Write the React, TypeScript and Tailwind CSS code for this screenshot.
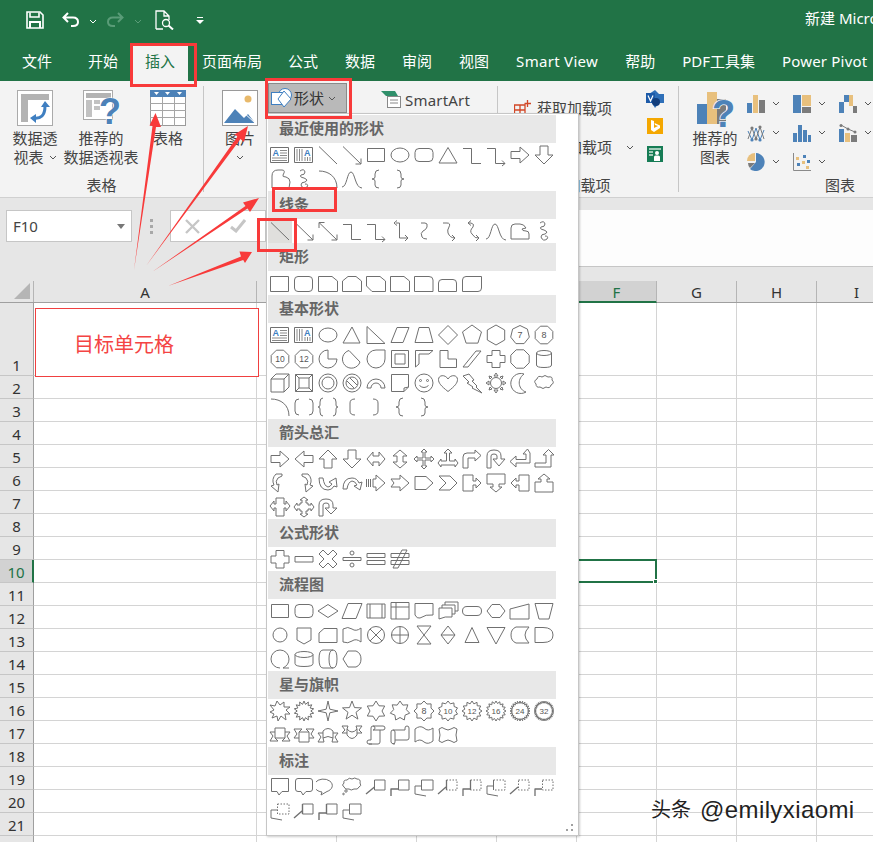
import React from "react";

type Shape = string | React.ReactNode;

function poly(n: number, r: number, rot = -90, ry = r): string {
  let d = "";
  for (let i = 0; i < n; i++) {
    const a = ((rot + (360 * i) / n) * Math.PI) / 180;
    d += (i ? "L" : "M") + (12 + r * Math.cos(a)).toFixed(1) + " " + (12 + ry * Math.sin(a)).toFixed(1);
  }
  return d + "Z";
}
function star(n: number, R: number, r: number): string {
  let d = "";
  for (let i = 0; i < n * 2; i++) {
    const a = ((-90 + (180 * i) / n) * Math.PI) / 180;
    const q = i % 2 ? r : R;
    d += (i ? "L" : "M") + (12 + q * Math.cos(a)).toFixed(1) + " " + (12 + q * Math.sin(a)).toFixed(1);
  }
  return d + "Z";
}
const Num = ({ t, size = 8 }: { t: string; size?: number }) => (
  <text x="12" y="15" textAnchor="middle" fontSize={size} fill="#555" stroke="none" fontFamily="Liberation Sans, sans-serif">
    {t}
  </text>
);
const badge = (d: string, t: string, size = 8) => (
  <>
    <path d={d} />
    <Num t={t} size={size} />
  </>
);
const txtBox = (
  <>
    <rect x="2.5" y="4.5" width="18" height="15" />
    <text x="4.5" y="12.5" fontSize="9" fontWeight="700" fill="#3f7fc1" stroke="none" fontFamily="Liberation Sans, sans-serif">A</text>
    <path d="M12 7.5H19M12 10H19M12 12.5H19M4 15H19M4 17.5H19" stroke="#8a8a8a" />
  </>
);
const vtxtBox = (
  <>
    <rect x="2.5" y="4.5" width="18" height="15" />
    <path d="M5 6V18M7.5 6V18M10 6V18M13 14V18M15.5 14V18M18 14V18" stroke="#8a8a8a" />
    <text x="12" y="12.5" fontSize="9" fontWeight="700" fill="#3f7fc1" stroke="none" fontFamily="Liberation Sans, sans-serif">A</text>
  </>
);
const LINE = "M3 3.5L21 21";
const ARROW = "M3 3.5L21 21M21 21H15.5M21 21V15.5";
const ELBOW = "M3 5.5H11.5V20.5H21";
const ELBOWA = "M3 5.5H11.5V20.5H21M21 20.5L18 17.5M21 20.5L18 23";
const FREE = "M4 21V9Q4 3 10 3H14Q18 3 15 8Q14 10 18 10Q22 11 22 15L21 21";
const SCRIB = "M8 4Q12 1 13 5Q13 8 9 8Q7 10 12 11Q17 13 13 15Q9 15 9 18Q11 23 15 20Q17 17 13 17";
const ARC = "M3 4C13 4 21 10 21 21";
const CURVE = "M2 20C7 20 7 5 11 5C15 5 15 21 22 21";
const BL = "M15 3Q11 3 11 7V10Q11 12 8 12Q11 12 11 14V18Q11 21 15 21";
const BR = "M9 3Q13 3 13 7V10Q13 12 16 12Q13 12 13 14V18Q13 21 9 21";
const TRI = "M12 4.5L21 20H3Z";
const RARR = "M3 8.5H12V4L21 12L12 20V15.5H3Z";
const DARR = "M8 3H16V12H21L12 21L3 12H8Z";
const RECT = "M3.5 5.5H20.5V18.5H3.5Z";
const RR = "M7 5.5H17Q21 5.5 21 9.5V14.5Q21 18.5 17 18.5H7Q3 18.5 3 14.5V9.5Q3 5.5 7 5.5Z";

const sections: { title: string; shapes: Shape[] }[] = [
  {
    title: "最近使用的形状",
    shapes: [
      txtBox, vtxtBox, LINE, ARROW, RECT, <ellipse cx="12" cy="12" rx="9" ry="7" />, RR, TRI, ELBOW, ELBOWA, RARR, DARR,
      FREE, SCRIB, ARC, CURVE, BL, BR,
    ],
  },
  {
    title: "线条",
    shapes: [
      LINE, ARROW, "M3 3.5L21 21M21 21H15.5M21 21V15.5M3 3.5H8.5M3 3.5V9", ELBOW, ELBOWA,
      "M8 4H11.5V19H20M20 19L17 16M20 19L17 22M6 4L9 1.5M6 4L9 6.5",
      "M9 4H13Q16 4 15 8Q14 11 11 12Q8 14 10 18Q11 20 15 20",
      "M7 4H11Q15 4 13 8Q11 11 12 14Q14 19 19 19M19 19L16 16M19 19L16 22",
      "M8 4H11Q15 5 13 8Q9 12 12 15Q15 20 19 19M19 19L16 16M19 19L16 22M8 4L11 1.5M8 4L11 6.5",
      CURVE, "M3 20V9Q3 5 7 5H12Q16 5 18 9L14 10Q14 12 18 12Q21 12 21 15V20Z", SCRIB,
    ],
  },
  {
    title: "矩形",
    shapes: [
      "M2.5 5.5H20.5V20.5H2.5Z",
      "M6 5.5H17Q20.5 5.5 20.5 9V17Q20.5 20.5 17 20.5H6Q2.5 20.5 2.5 17V9Q2.5 5.5 6 5.5Z",
      "M2.5 5.5H16L21.5 10V20.5H2.5Z",
      "M8 5.5H16L21.5 10V20.5H2.5V10Z",
      "M2.5 5.5H16L21.5 10V20.5H8L2.5 15Z",
      "M2.5 5.5H16L21.5 10V20.5H2.5Z",
      "M2.5 5.5H17Q21 5.5 21 9V20.5H2.5Z",
      "M6 8.5H17Q20.5 8.5 20.5 12V20.5H2.5V12Q2.5 8.5 6 8.5Z",
      "M6 5.5H21.5V17Q21.5 20.5 18 20.5H2.5V9Q2.5 5.5 6 5.5Z",
    ],
  },
  {
    title: "基本形状",
    shapes: [
      txtBox, vtxtBox, <ellipse cx="12" cy="12" rx="9" ry="7" />, "M12 4L20 20H3Z", "M3 3.5L21 20.5H3Z", "M9 4.5H21L15 19.5H3Z", "M7 4.5H17L21 19.5H3Z",
      poly(4, 9.5), poly(5, 10), poly(6, 10), badge(poly(7, 9.5), "7", 9), badge(poly(8, 9.5, -67.5), "8", 9),
      badge(poly(8, 9.5, -67.5), "10", 8.5), badge(poly(8, 9.5, -67.5), "12", 8.5),
      "M12 3A9 9 0 1 0 21 12H12Z", "M9 3.5L20 15A9 9 0 1 1 9 3.5Z",
      "M12 3H21V12A9 9 0 1 1 12 3Z",
      <><path d="M3.5 3.5H20.5V20.5H3.5Z" /><path d="M7 7H17V17H7Z" /></>,
      "M3.5 20V3.5H21L17 7H7V17Z", "M4 3.5H12V12H20.5V20.5H4Z", "M3 20L16 4H21L8 20Z",
      "M8 3.5H16V8.5H21V15.5H16V20.5H8V15.5H3V8.5H8Z", poly(8, 10, -67.5), <><ellipse cx="12" cy="6" rx="7.5" ry="2.5" /><path d="M4.5 6V18Q4.5 20.5 12 20.5Q19.5 20.5 19.5 18V6" /></>,
      "M3 8H16V21H3ZM3 8L8 3H21V16L16 21M16 8L21 3",
      <><path d="M3.5 3.5H20.5V20.5H3.5Z" /><path d="M7 7H17V17H7ZM3.5 3.5L7 7M20.5 3.5L17 7M3.5 20.5L7 17M20.5 20.5L17 17" /></>,
      <><circle cx="12" cy="12" r="9" /><circle cx="12" cy="12" r="6" /></>,
      <><circle cx="12" cy="12" r="9" /><circle cx="12" cy="12" r="6" /><path d="M7 10L14 17M10 7L17 14" /></>,
      "M3 17A9 9 0 0 1 21 17H17A5 5 0 0 0 7 17Z",
      "M3.5 3.5H20.5V16L16 20.5H3.5ZM20.5 16L16 17V20.5",
      <><circle cx="12" cy="12" r="9" /><circle cx="8.5" cy="9.5" r="1" /><circle cx="15.5" cy="9.5" r="1" /><path d="M7.5 14.5Q12 18.5 16.5 14.5" /></>,
      "M12 20.5C5 15 2.5 12 2.5 8.5C2.5 4 9 3 12 8C15 3 21.5 4 21.5 8.5C21.5 12 19 15 12 20.5Z",
      "M3 5L9 3L14 9L12 10L17 15L16 16L22 22L12 17L13 16L7 12L9 11Z",
      <><circle cx="12" cy="12" r="5.5" /><path d="M12 2L14 5H10ZM12 22L14 19H10ZM2 12L5 14V10ZM22 12L19 14V10ZM5 5L8 6L6 8ZM19 5L16 6L18 8ZM5 19L8 18L6 16ZM19 19L16 18L18 16Z" /></>,
      "M16 3A10 10 0 1 0 18 21C11 19 8 9 16 3Z",
      "M5 8Q6 4 10 6Q13 3 16 6Q21 5 20 9Q23 12 19 14Q18 18 14 16Q11 19 8 16Q4 17 4 13Q1 10 5 8Z",
      ARC, "M7 4Q3 4 3 8V16Q3 20 7 20M17 4Q21 4 21 8V16Q21 20 17 20",
      "M7 3Q4 3 4 7V10Q4 12 2 12Q4 12 4 14V17Q4 21 7 21M17 3Q20 3 20 7V10Q20 12 22 12Q20 12 20 14V17Q20 21 17 21",
      "M15 4Q10 4 10 8V16Q10 20 15 20", "M9 4Q14 4 14 8V16Q14 20 9 20", BL, BR,
    ],
  },
  {
    title: "箭头总汇",
    shapes: [
      RARR, "M21 8.5H12V4L3 12L12 20V15.5H21Z", "M8 21V12H3L12 3L21 12H16V21Z", DARR,
      "M3 12L9 5V9H15V5L21 12L15 19V15H9V19Z", "M12 3L19 9H15V15H19L12 21L5 15H9V9H5Z",
      "M12 2L15 5H13V11H19V9L22 12L19 15V13H13V19H15L12 22L9 19H11V13H5V15L2 12L5 9V11H11V5H9Z",
      "M12 2L16 6H13.5V14H19V12L22 16L19 20V18H5V20L2 16L5 12V14H10.5V6H8Z",
      "M3 21V10Q3 6 7 6H15V3L21 8.5L15 14V11H8V21Z",
      "M3 21V9Q3 3 10 3Q17 3 17 9V12H21L15 19L9 12H13V9Q13 7 10 7Q7 7 7 9V21Z",
      "M22 6V16H8V20L2 14.5L8 9V12.5H18V7H15L19.5 2Z",
      "M3 16H14V8H11L16.5 2.5L22 8H19V20H3Z",
      "M8 3Q3 8 6 14L3 15L10 21L11 13L9 14Q7 10 10 7L14 5V3Z",
      "M16 3Q21 8 18 14L21 15L14 21L13 13L15 14Q17 10 14 7L10 5V3Z",
      "M3 7Q3 19 12 19Q16 19 18 15L21 16L20 7L13 11L16 13Q14 16 12 16Q8 15 7 7Z",
      "M3 18Q3 7 12 7Q17 7 19 12L22 11L20 19L14 15L17 14Q15 10 12 10Q8 11 7 18Z",
      "M2.5 8V16M4.5 8V16M6.5 8V16M9 8H12V4L21 12L12 20V16H9Z", "M3 8H12V4L21 12L12 20V16H3L6 12Z",
      "M3 5.5H14L21 12L14 18.5H3Z", "M3 5L14 5L21 12L14 19H3L10 12Z",
      "M3 4H13V10H16V7L21 12L16 17V14H13V20H3Z", "M3 3H21V13H15V16H18L12 21L6 16H9V13H3Z",
      "M21 4H11V10H8V7L3 12L8 17V14H11V20H21Z", "M3 21V11H9V8H6L12 3L18 8H15V11H21V21Z",
      "M8 3H16V9H18V6L22 11L18 16V13H16V21H8V13H6V16L2 11L6 6V9H8Z",
      "M8 8H10V5H8L12 2L16 5H14V8H16V10H19V8L22 12L19 16V14H16V16H14V19H16L12 22L8 19H10V16H8V14H5V16L2 12L5 8V10H8Z",
      "M3 21V10Q3 4 10 4Q17 4 17 10V13H21L15 19L9 13H13V10Q13 8 10 8Q7 8 7 10V21Z",
    ],
  },
  {
    title: "公式形状",
    shapes: [
      "M8 3.5H16V9H21V16H16V21H8V16H3V9H8Z", "M3 9.5H21V15H3Z", "M7 3L12 8L17 3L21 7L16 12L21 17L17 21L12 16L7 21L3 17L8 12L3 7Z",
      <><path d="M3 10.5H21V13.5H3Z" /><circle cx="12" cy="6" r="2" /><circle cx="12" cy="18" r="2" /></>,
      "M3 6.5H21V10.5H3ZM3 13.5H21V17.5H3Z", "M3 6.5H21V10.5H3ZM3 13.5H21V17.5H3ZM14 3H19L10 21H5Z",
    ],
  },
  {
    title: "流程图",
    shapes: [
      RECT, RR, "M12 5.5L22 12L12 18.5L2 12Z", "M8 4.5H22L16 19.5H2Z",
      <><path d="M3 5H21V19H3Z" /><path d="M6 5V19M18 5V19" /></>, <><path d="M3 3.5H21V20H3Z" /><path d="M3 8H21M8 3.5V20" /></>,
      "M3 4.5H21V16Q14 15 8 19Q5 20 3 16Z",
      "M3 9H16V18Q9 17 3 20ZM6 9V6H19V15H16M9 6V3H22V12H19",
      "M7 7.5H17Q21.5 7.5 21.5 12Q21.5 16.5 17 16.5H7Q2.5 16.5 2.5 12Q2.5 7.5 7 7.5Z", "M8 5.5H16L21 12L16 18.5H8L3 12Z", "M2 10L21 5V20H2Z", "M3 4.5H21L17 20H7Z",
      <circle cx="12" cy="12" r="7" />, "M5 5H19V17L12 21L5 17Z", "M8 5.5H21V19.5H3V10Z", "M3 6Q8 3 12 6Q16 9 21 5V19Q16 15 12 18Q8 21 3 19Z",
      <><circle cx="12" cy="12" r="8.5" /><path d="M6 6L18 18M18 6L6 18" /></>, <><circle cx="12" cy="12" r="8.5" /><path d="M3.5 12H20.5M12 3.5V20.5" /></>,
      "M5 3H19L5 21H19Z", "M12 3L19 12L12 21L5 12ZM5 12H19", "M12 4.5L19 19.5H5Z", "M3 4.5H21L12 21Z",
      "M8 4H21Q17 8 17 12Q17 16 21 20H8Q3 18 3 12Q3 6 8 4Z", "M3 4.5H11Q21 4.5 21 12Q21 19.5 11 19.5H3Z",
      "M12 21A9 9 0 1 1 21 12Q21 18 15 21H21", <><ellipse cx="12" cy="7.5" rx="9" ry="3" /><path d="M3 7.5V16.5Q3 19.5 12 19.5Q21 19.5 21 16.5V7.5" /></>,
      <><path d="M7 3H17Q21 3 21 12Q21 21 17 21H7Q3 21 3 12Q3 3 7 3Z" /><path d="M17 3Q13 3 13 12Q13 21 17 21" /></>,
      "M8 4H16Q21 6 21 12Q21 18 16 20H8L3 12Z",
    ],
  },
  {
    title: "星与旗帜",
    shapes: [
      "M2 6L7 7L9 2L12 6L16 3L16 8L22 8L18 11L22 15L17 15L18 21L13 17L10 22L9 17L4 19L6 15L2 13L6 11Z",
      star(14, 10, 6.8), star(4, 10, 2.5), star(5, 10, 4.2), star(6, 10, 6), star(7, 10, 6.5),
      badge(star(8, 10, 7.6), "8", 9), badge(star(10, 10, 7.6), "10", 8), badge(star(12, 10, 7.4), "12", 8), badge(star(16, 10, 7.6), "16", 8), badge(star(24, 10, 7.6), "24", 8), badge(star(32, 10, 7.8), "32", 8),
      "M7 5H17V15H7ZM7 9H2L5 13L2 18H10L7 15M17 9H22L19 13L22 18H14L17 15",
      "M7 9H17V19H7ZM7 15H2L5 11L2 6H10L7 9M17 15H22L19 11L22 6H14L17 9",
      "M7 8Q12 3 17 8V15Q12 12 7 15ZM7 10H2L5 14L2 19H8L7 15M17 10H22L19 14L22 19H16L17 15",
      "M7 12Q12 19 17 12V6Q12 12 7 6ZM7 10H2L5 7L2 3H8L7 6M17 10H22L19 7L22 3H16L17 6",
      "M8 21H5Q3 21 3 19Q3 17 5 17H7V5Q7 3 9 3H19Q21 3 21 5Q21 7 19 7H16V19Q16 21 14 21H5M9 3Q11 3 11 5Q11 7 9 7H16",
      "M7 21Q3 21 3 19V9Q3 7 5 7H17V5Q17 3 19 3Q21 3 21 5V15Q21 17 19 17H7V19Q7 21 5 21M5 7Q7 7 7 9V17",
      "M3 6Q8 2 12 5Q16 9 21 5V18Q16 22 12 19Q8 15 3 19Z",
      "M3 6Q6 3 9 6Q12 8 15 6Q18 3 21 6L20 12L21 18Q18 21 15 18Q12 16 9 18Q6 21 3 18L4 12Z",
    ],
  },
  {
    title: "标注",
    shapes: [
      "M3.5 3.5H20.5V16.5H14L11 20L9 16.5H3.5Z",
      "M6 3.5H18Q20.5 3.5 20.5 6V14Q20.5 16.5 18 16.5H14L11 20L9 16.5H6Q3.5 16.5 3.5 14V6Q3.5 3.5 6 3.5Z",
      "M6 17A9 6.5 0 1 1 11 16.5L5 20Z",
      <><path d="M7 5Q9 2 12 4Q15 2 17 4Q21 4 20 8Q22 11 19 12Q18 15 14 14Q11 16 9 14Q5 15 4 12Q1 10 4 8Q3 5 7 5Z" /><circle cx="6" cy="16" r="1.2" /><circle cx="3.5" cy="19" r="0.8" /></>,
      <><path d="M10.5 5H21V15H10.5Z" /><path d="M2 19L10.5 12" strokeWidth="1.4" /></>,
      <><path d="M10.5 5H21V15H10.5Z" /><path d="M3 21V14H10.5" strokeWidth="1.4" /></>,
      <><path d="M9.5 5H21V15H9.5Z" /><path d="M3 11H9.5M3 11V19L14 21" /></>,
      <><path d="M10.5 5H21V15H10.5Z" strokeDasharray="1.5 1.5" /><path d="M10.5 5V15M2 19L10 12" strokeWidth="1.3" /></>,
      <><path d="M10.5 5H21V15H10.5Z" strokeDasharray="1.5 1.5" /><path d="M10.5 5V15M3 21V14H10" strokeWidth="1.3" /></>,
      <><path d="M9.5 5H21V15H9.5Z" strokeDasharray="1.5 1.5" /><path d="M9.5 5V15M3 11H9.5M3 11V19L14 21" /></>,
      <><path d="M10.5 5H21V15H10.5Z" strokeDasharray="1.5 1.5" /><path d="M2 19L10 12" strokeWidth="1.3" /></>,
      <><path d="M10.5 5H21V15H10.5Z" strokeDasharray="1.5 1.5" /><path d="M3 21V14H10" strokeWidth="1.3" /></>,
      <><path d="M9.5 5H21V15H9.5Z" strokeDasharray="1.5 1.5" /><path d="M3 11H9.5M3 11V19L14 21" /></>,
      <><path d="M10.5 5H21V15H10.5Z" /><path d="M10.5 5V15M2 19L10 12" strokeWidth="1.4" /></>,
      <><path d="M10.5 5H21V15H10.5Z" /><path d="M10.5 5V15M3 21V14H10" strokeWidth="1.4" /></>,
      <><path d="M9.5 5H21V15H9.5Z" /><path d="M9.5 5V15M3 11H9.5M3 11V19L14 21" /></>,
    ],
  },
];

function Gl({ shape }: { shape: Shape }) {
  return (
    <svg width="24" height="24" viewBox="0 0 24 24" fill="none" stroke="#707070" strokeWidth="1" strokeLinejoin="round">
      {typeof shape === "string" ? <path d={shape} /> : shape}
    </svg>
  );
}

function Chev({ className = "" }: { className?: string }) {
  return (
    <svg width="8" height="5" viewBox="0 0 8 5" fill="none" stroke="#555" strokeWidth="1" className={`shrink-0 ${className}`}>
      <path d="M1 1L4 4L7 1" />
    </svg>
  );
}

const BLUE = "#4d82b8";
const YEL = "#e8c07d";
const GRY = "#7b7b7b";

const small: React.ReactNode[] = [
  <><rect x="0" y="8" width="5" height="10" fill={BLUE} /><rect x="6" y="0" width="5" height="18" fill={YEL} /><rect x="12" y="5" width="6" height="13" fill={GRY} /></>,
  <><rect x="0" y="0" width="8" height="18" fill={BLUE} /><rect x="9" y="0" width="9" height="11" fill={YEL} /><rect x="9" y="12" width="9" height="6" fill={GRY} /></>,
  <><rect x="0" y="7" width="5" height="11" fill={BLUE} /><rect x="5" y="0" width="5" height="7" fill={BLUE} /><rect x="10" y="0" width="4" height="11" fill={YEL} /><rect x="14" y="11" width="4" height="7" fill={GRY} /></>,
  <><path d="M1 7L5 16L9 4L13 16L17 6" fill="none" stroke={BLUE} /><path d="M1 15L5 4L9 15L13 3L17 15" fill="none" stroke={GRY} /><circle cx="5" cy="4" r="1.6" fill={GRY} /><circle cx="13" cy="3" r="1.6" fill={GRY} /><circle cx="5" cy="16" r="1.6" fill={BLUE} /><circle cx="13" cy="16" r="1.6" fill={BLUE} /><circle cx="9" cy="15" r="1.6" fill={GRY} /></>,
  <><rect x="0" y="9" width="4" height="9" fill={BLUE} /><rect x="5" y="1" width="4" height="17" fill={BLUE} /><rect x="10" y="6" width="4" height="12" fill={BLUE} /><rect x="15" y="11" width="3" height="7" fill={BLUE} /></>,
  <><rect x="0" y="5" width="5" height="13" fill={BLUE} /><rect x="6" y="9" width="5" height="9" fill={YEL} /><rect x="12" y="11" width="6" height="7" fill={GRY} /><path d="M2 1L9 5L16 8" stroke={GRY} fill="none" /><circle cx="2" cy="1.5" r="1.5" fill={GRY} /><circle cx="9" cy="5" r="1.5" fill={GRY} /><circle cx="16" cy="8" r="1.5" fill={GRY} /></>,
  <><path d="M9 9V0A9 9 0 1 1 3 16Z" fill={BLUE} /><path d="M8 8H0A8 8 0 0 1 8 0Z" fill={YEL} /><path d="M8 10H1Q1 13 3 15Z" fill={GRY} /></>,
  <><path d="M0.5 0V17.5H18" fill="none" stroke="#8a8a8a" /><rect x="3" y="4" width="3" height="3" fill={YEL} /><rect x="10" y="2" width="3" height="3" fill={BLUE} /><rect x="4" y="10" width="3" height="3" fill={BLUE} /><rect x="9" y="8" width="3" height="3" fill={YEL} /><rect x="14" y="7" width="3" height="3" fill={BLUE} /><rect x="13" y="13" width="3" height="3" fill={YEL} /></>,
];

function Big({ icon, lines, w = "w-[66px]" }: { icon: React.ReactNode; lines: React.ReactNode[]; w?: string }) {
  return (
    <div className={`${w} flex flex-col items-center pt-[9px] shrink-0`}>
      <div className="h-[36px] mb-[3px]">{icon}</div>
      {lines.map((l, i) => (
        <div key={i} className="h-[19px] leading-[19px] whitespace-nowrap flex items-center">
          {l}
        </div>
      ))}
    </div>
  );
}

const PivotIcon = (
  <svg width="36" height="36" viewBox="0 0 36 36">
    <rect x="0.5" y="0.5" width="35" height="35" fill="#fff" stroke="#aaa" />
    <rect x="4" y="4" width="28" height="6" fill="#b3b3b3" />
    <rect x="4" y="4" width="7" height="28" fill="#b3b3b3" />
    <path d="M16 28Q28 30 28 16" fill="none" stroke="#3f7fc1" strokeWidth="3" />
    <path d="M24 17L28 11L33 17ZM19 24L13 28L19 33Z" fill="#3f7fc1" />
  </svg>
);
const RecPivotIcon = (
  <svg width="36" height="36" viewBox="0 0 36 36" className="overflow-visible">
    <rect x="0.5" y="0.5" width="29" height="29" fill="#fff" stroke="#aaa" />
    <rect x="3" y="3" width="25" height="5" fill="#b3b3b3" />
    <path d="M3 10H9V27H3ZM11 10H17V14H11ZM11 16H17V20H11Z" fill="#c2c2c2" />
    <text x="16" y="34" fontSize="36" fontWeight="700" fill="#4d82b8" stroke="#fff" strokeWidth="1.2" paintOrder="stroke" fontFamily="Liberation Sans, sans-serif">?</text>
  </svg>
);
const TableIcon = (
  <svg width="36" height="36" viewBox="0 0 36 36">
    <rect x="0.5" y="0.5" width="35" height="35" fill="#fff" stroke="#9a9a9a" />
    <rect x="0" y="0" width="36" height="7" fill="#4d82b8" />
    <path d="M4 2H9L6.5 5ZM15 2H20L17.5 5ZM27 2H32L29.5 5Z" fill="#fff" />
    <path d="M12.5 7V36M24.5 7V36M0 13.5H36M0 20.5H36M0 27.5H36" stroke="#a6a6a6" />
  </svg>
);
const PicIcon = (
  <svg width="36" height="36" viewBox="0 0 36 36">
    <rect x="0.5" y="0.5" width="35" height="35" fill="#fff" stroke="#9a9a9a" />
    <circle cx="26" cy="9" r="3.5" fill="#e8b96b" />
    <path d="M2 33L13 19L22 28L26 24L33 33Z" fill="#4d82b8" />
    <path d="M20 21L33 33" stroke="#fff" strokeWidth="1" />
  </svg>
);
const ShapeIcon = (
  <svg width="22" height="22" viewBox="0 0 22 22" className="shrink-0">
    <circle cx="14" cy="8" r="6.5" fill="#fff" stroke="#3f7fc1" />
    <rect x="0.5" y="5.5" width="12" height="12" fill="#fff" stroke="#3f7fc1" />
    <path d="M13 4L20 12L13 20L7 12Z" fill="#fff" stroke="#3f7fc1" />
  </svg>
);
const RecChartIcon = (
  <svg width="36" height="36" viewBox="0 0 36 36" className="overflow-visible">
    <rect x="0" y="14" width="11" height="20" fill={BLUE} />
    <rect x="10" y="2" width="10" height="32" fill={YEL} />
    <rect x="20" y="9" width="9" height="25" fill={GRY} />
    <text x="15" y="37" fontSize="38" fontWeight="700" fill="#4d82b8" stroke="#f3f3f3" strokeWidth="1.5" paintOrder="stroke" fontFamily="Liberation Sans, sans-serif">?</text>
  </svg>
);

const gridLine = "border-r border-b border-[#d4d4d4]";
const colWidths = ["w-[223px]", "w-[80px]", "w-[80px]", "w-[80px]", "w-[80px]", "w-[80px]", "w-[80px]", "w-[80px]", "w-[80px]"];
const colNames = ["A", "B", "C", "D", "E", "F", "G", "H", "I"];
const hiddenCols = ["B", "C", "D", "E"];
const rows = Array.from({ length: 22 }, (_, i) => i + 1);

export default function App() {
  return (
    <div className="relative w-[873px] h-[842px] overflow-hidden bg-white text-[#444] text-[15px] font-['Noto_Sans','Noto_Sans_CJK_SC',sans-serif]">
      {/* title bar */}
      <div className="h-[46px] bg-[#217346] flex items-center text-white">
        <svg width="18" height="18" viewBox="0 0 18 18" className="shrink-0 ml-[26px] -mt-[6px]" fill="none" stroke="#fff" strokeWidth="1.6">
          <path d="M1 1H14L17 4V17H1Z" />
          <path d="M4 1.5V6H13V1.5" />
          <path d="M4 17V11H14V17" strokeWidth="2" />
        </svg>
        <svg width="18" height="16" viewBox="0 0 18 16" className="shrink-0 ml-[18px] -mt-[6px]" fill="none" stroke="#fff" strokeWidth="2">
          <path d="M6 1L1.5 5.5L6 10M2 5.5H11Q16 5.5 16 10Q16 14 11 14H9" />
        </svg>
        <Chev className="ml-[9px] -mt-[4px] [&>path]:stroke-white" />
        <svg width="18" height="16" viewBox="0 0 18 16" className="shrink-0 ml-[9px] -mt-[6px]" fill="none" stroke="#5a9c78" strokeWidth="2">
          <path d="M12 1L16.5 5.5L12 10M16 5.5H7Q2 5.5 2 10Q2 14 7 14H9" />
        </svg>
        <Chev className="ml-[10px] -mt-[4px] [&>path]:stroke-[#5a9c78]" />
        <svg width="20" height="20" viewBox="0 0 20 20" className="shrink-0 ml-[13px] -mt-[6px]" fill="none" stroke="#fff" strokeWidth="1.3">
          <path d="M1 19V1H9L14 6V10M9 1V6H14M1 19H8" />
          <circle cx="11" cy="13" r="3.5" />
          <path d="M13.5 15.5L18 19.5" strokeWidth="2" />
        </svg>
        <svg width="8" height="8" viewBox="0 0 8 8" className="shrink-0 ml-[21px] -mt-[4px]" fill="#fff">
          <path d="M1 0H7V1H1ZM0 3H8L4 7Z" />
        </svg>
        <div className="ml-[601px] shrink-0 whitespace-nowrap text-[15px] text-white -mt-[9px]">新建 Microsoft Excel 工作表 - Excel</div>
      </div>
      {/* tabs */}
      <div className="h-[35px] bg-[#217346] flex text-white whitespace-nowrap">
        <div className="ml-[22px] leading-[30px]">文件</div>
        <div className="ml-[36px] leading-[30px]">开始</div>
        <div className="ml-[14px] w-[56px] bg-[#f3f3f3] text-[#217346] text-center leading-[30px]">插入</div>
        <div className="ml-[14px] leading-[30px]">页面布局</div>
        <div className="ml-[26px] leading-[30px]">公式</div>
        <div className="ml-[27px] leading-[30px]">数据</div>
        <div className="ml-[27px] leading-[30px]">审阅</div>
        <div className="ml-[27px] leading-[30px]">视图</div>
        <div className="ml-[27px] leading-[30px] tracking-[0.3px]">Smart View</div>
        <div className="ml-[27px] leading-[30px]">帮助</div>
        <div className="ml-[27px] leading-[30px]">PDF工具集</div>
        <div className="ml-[27px] leading-[30px] tracking-[0.2px]">Power Pivot</div>
      </div>
      {/* ribbon */}
      <div className="h-[117px] bg-[#f3f3f3] border-b border-[#d0d0d0] flex">
        <div className="w-[203px] shrink-0 flex flex-col">
          <div className="h-[92px] flex px-[2px]">
            <Big icon={PivotIcon} lines={["数据透", <>视表<Chev className="ml-[5px]" /></>]} />
            <Big icon={RecPivotIcon} lines={["推荐的", "数据透视表"]} />
            <div className="ml-px">
              <Big icon={TableIcon} lines={["表格"]} />
            </div>
          </div>
          <div className="h-[24px] leading-[24px] text-center">表格</div>
        </div>
        <div className="w-px bg-[#c6c6c6] my-[5px] shrink-0" />
        <div className="w-[293px] shrink-0 flex flex-col">
          <div className="h-[92px] flex items-start">
            <div className="ml-[8px]">
              <Big w="w-[56px]" icon={PicIcon} lines={["图片", <Chev />]} />
            </div>
            <div className="mt-[2px] w-[79px] h-[30px] bg-[#b9b9b9] border border-[#8a8a8a] flex items-center pl-[2px] text-[#333]">
              {ShapeIcon}
              <span className="ml-px">形状</span>
              <Chev className="ml-[4px]" />
            </div>
            <div className="ml-[34px] mt-[8px] flex items-center text-[#444]">
              <svg width="20" height="18" viewBox="0 0 20 18">
                <path d="M0 0H14L17 5H5Z" fill="#2f8f6a" />
                <rect x="6.5" y="5.5" width="13" height="11" fill="#fff" stroke="#888" />
                <path d="M9 9H17M9 12H17" stroke="#888" />
              </svg>
              <span className="ml-[4px] tracking-[0.2px]">SmartArt</span>
            </div>
          </div>
          <div className="h-[24px] leading-[24px] text-center">插图</div>
        </div>
        <div className="w-px bg-[#c6c6c6] my-[5px] shrink-0" />
        <div className="w-[180px] shrink-0 flex flex-col">
          <div className="h-[92px] flex">
            <div className="w-[140px] pl-[16px] pt-[15px] flex flex-col gap-[15px] shrink-0">
              <div className="h-[24px] flex items-center whitespace-nowrap">
                <svg width="17" height="16" viewBox="0 0 17 16" fill="none" stroke="#d24726" strokeWidth="1.3">
                  <path d="M0.5 5H11V15H0.5ZM0.5 10H11M6 5V15M13.5 0V7M10.5 3.5H17" />
                </svg>
                <span className="ml-[6px]">获取加载项</span>
              </div>
              <div className="h-[24px] flex items-center whitespace-nowrap">
                <svg width="17" height="16" viewBox="0 0 17 16" fill="#3f7fc1"><rect width="15" height="14" /></svg>
                <span className="ml-[6px]">我的加载项</span>
                <Chev className="ml-[14px]" />
              </div>
            </div>
            <div className="pt-[9px] flex flex-col gap-[10px] ml-[8px] shrink-0">
              <svg width="18" height="18" viewBox="0 0 18 18">
                <path d="M3 4L9 0L13 4H18V13H13L9 18L6 13H3Z" fill="#2e6fb8" />
                <rect x="0" y="3" width="9" height="10" fill="#1c5aa8" />
                <circle cx="10" cy="12" r="4" fill="#123e7c" />
                <path d="M2 5.5L4.5 11L7 5.5" stroke="#fff" strokeWidth="1.2" fill="none" />
              </svg>
              <svg width="18" height="18" viewBox="0 0 18 18">
                <rect x="1" width="16" height="16" fill="#f4a700" />
                <path d="M5 2L8 3V10L12 8L9 7L8.5 5L14 7.5V10L8 14L5 12Z" fill="#fff" />
              </svg>
              <svg width="18" height="18" viewBox="0 0 18 18">
                <rect x="1" width="16" height="16" fill="#167c55" />
                <path d="M3 3H15M3 6H7M3 9H7" stroke="#cfe6dc" strokeWidth="1.5" />
                <circle cx="11" cy="7" r="2" fill="#fff" />
                <path d="M8 15V11Q8 9.5 9.5 9.5H12.5Q14 9.5 14 11V15Z" fill="#fff" />
              </svg>
            </div>
          </div>
          <div className="h-[24px] leading-[24px] text-center">加载项</div>
        </div>
        <div className="w-px bg-[#c6c6c6] my-[5px] shrink-0" />
        <div className="w-[322px] shrink-0 flex flex-col">
          <div className="h-[92px] flex">
            <div className="ml-[4px]">
              <Big w="w-[64px]" icon={RecChartIcon} lines={["推荐的", "图表"]} />
            </div>
            <div className="pt-[8px] w-[138px] flex flex-wrap content-start shrink-0">
              {small.map((s, i) => (
                <div key={i} className="w-[46px] h-[29px] flex items-center">
                  <svg width="18" height="18" viewBox="0 0 18 18">{s}</svg>
                  <Chev className="ml-[7px]" />
                </div>
              ))}
            </div>
          </div>
          <div className="h-[24px] leading-[24px] text-center">图表</div>
        </div>
      </div>
      {/* formula bar */}
      <div className="h-[83px] bg-[#e6e6e6] flex items-start pt-[12px]">
        <div className="ml-[6px] w-[126px] h-[32px] bg-white border border-[#c6c6c6] flex items-center justify-between px-[6px]">
          <span>F10</span>
          <svg width="8" height="5" viewBox="0 0 8 5" fill="#777"><path d="M0 0H8L4 5Z" /></svg>
        </div>
        <div className="w-[38px] h-[32px] flex flex-col items-center justify-center gap-[3px]">
          <span className="w-[3px] h-[3px] bg-[#a8a8a8]" />
          <span className="w-[3px] h-[3px] bg-[#a8a8a8]" />
          <span className="w-[3px] h-[3px] bg-[#a8a8a8]" />
        </div>
        <div className="w-[96px] h-[32px] bg-white border border-[#c6c6c6] flex items-center pl-[14px] gap-[30px] shrink-0">
          <svg width="15" height="15" viewBox="0 0 15 15" stroke="#c6c6c6" strokeWidth="2.4"><path d="M1 1L14 14M14 1L1 14" /></svg>
          <svg width="16" height="14" viewBox="0 0 16 14" fill="none" stroke="#c6c6c6" strokeWidth="3"><path d="M1 8L6 12L15 1" /></svg>
        </div>
        <div className="flex-1 h-[57px] bg-[#fdfdfd] border-b border-[#c6c6c6]" />
      </div>
      {/* column headers */}
      <div className="h-[22px] flex bg-[#e6e6e6] border-b border-[#9f9f9f]">
        <div className="w-[34px] shrink-0 border-r border-[#b5b5b5] relative flex justify-end items-end pr-[3px] pb-[3px]">
          <svg width="16" height="16" viewBox="0 0 16 16" fill="#b5b5b5"><path d="M16 0V16H0Z" /></svg>
        </div>
        {colNames.map((c, i) => (
          <div
            key={c}
            className={`${colWidths[i]} shrink-0 text-center leading-[22px] border-r border-[#b5b5b5] ${
              c === "F" ? "bg-[#d2d2d2] text-[#217346] border-b-2 border-b-[#217346] h-[22px]" : "text-[#333]"
            }`}
          >
            {hiddenCols.includes(c) ? "" : c}
          </div>
        ))}
      </div>
      {/* rows */}
      {rows.map((r) => (
        <div key={r} className={`flex ${r === 1 ? "h-[73px]" : "h-[23px]"}`}>
          <div
            className={`w-[34px] shrink-0 flex items-end justify-center leading-[20px] border-b border-[#c6c6c6] ${
              r === 10 ? "bg-[#d2d2d2] text-[#217346] border-r-2 border-r-[#217346]" : "bg-[#e6e6e6] text-[#333] border-r border-r-[#9f9f9f]"
            }`}
          >
            {r === 22 ? "" : r}
          </div>
          {colNames.map((c, i) => (
            <div key={c} className={`${colWidths[i]} shrink-0 relative ${gridLine}`}>
              {r === 10 && c === "F" && (
                <div className="absolute -left-px -top-px -right-px -bottom-px border-2 border-[#217346] z-10">
                  <span className="absolute -right-[3px] -bottom-[3px] w-[5px] h-[5px] bg-[#217346] border border-white" />
                </div>
              )}
            </div>
          ))}
        </div>
      ))}
      {/* target-cell text box */}
      <div className="absolute left-[35px] top-[308px] w-[224px] h-[69px] border border-[#f04040] bg-white flex items-center pl-[38px] pt-[4px] text-[20px] text-[#f44444]">
        目标单元格
      </div>
      {/* shapes dropdown */}
      <div className="absolute z-20 left-[266px] top-[113px] w-[313px] h-[723px] bg-white border border-[#c6c6c6] pl-px pt-px shadow-[1px_1px_2px_rgba(0,0,0,0.2)]">
        {sections.map((s) => (
          <div key={s.title} className="w-[288px]">
            <div className="h-[28px] bg-[#e8e8e8] pl-[11px] leading-[26px] font-bold text-[#666]">{s.title}</div>
            <div className="grid grid-cols-12">
              {s.shapes.map((sh, i) => (
                <div key={i} className={`w-[24px] h-[24px] ${s.title === "线条" && i === 0 ? "bg-[#e0dfdd]" : ""}`}>
                  <Gl shape={sh} />
                </div>
              ))}
            </div>
          </div>
        ))}
        <svg width="10" height="10" viewBox="0 0 10 10" fill="#a0a0a0" className="absolute right-[4px] bottom-[2px]">
          <rect x="7" y="1" width="2" height="2" />
          <rect x="7" y="6" width="2" height="2" />
          <rect x="2" y="6" width="2" height="2" />
        </svg>
      </div>
      {/* red annotations */}
      <div className="absolute z-30 left-[130px] top-[43px] w-[67px] h-[44px] border-[3px] border-[#f83a3a]" />
      <div className="absolute z-30 left-[265px] top-[78px] w-[87px] h-[41px] border-[3px] border-[#f83a3a]" />
      <div className="absolute z-30 left-[272px] top-[187px] w-[65px] h-[25px] border-[3px] border-[#f83a3a]" />
      <div className="absolute z-30 left-[257px] top-[218px] w-[40px] h-[34px] border-[3px] border-[#f83a3a]" />
      <svg width="873" height="842" viewBox="0 0 873 842" className="absolute z-30 left-0 top-0 pointer-events-none" fill="#f83a3a">
        <path d="M134 270L152.5 126L149.5 125.5L155.5 113L161 127L156 127Z" />
        <path d="M146 266L237.5 136.5L234.5 134.5L248 126L244 142L240.5 139Z" />
        <path d="M152 272L245.5 206L243 202.5L259 198L250 212L247.5 208.5Z" />
        <path d="M168 286L241 256.5L239.5 251.5L252 252L245 263L243.2 260Z" />
      </svg>
      {/* watermark */}
      <div className="absolute z-30 left-[651px] top-[795px] h-[30px] flex items-center whitespace-nowrap text-[#222] [text-shadow:0_1px_1px_#fff] font-['Liberation_Sans','Noto_Sans_CJK_SC',sans-serif]">
        <span className="text-[20px] w-[49px]">头条</span>
        <span className="text-[24px] tracking-[0.4px]">@emilyxiaomi</span>
      </div>
    </div>
  );
}
